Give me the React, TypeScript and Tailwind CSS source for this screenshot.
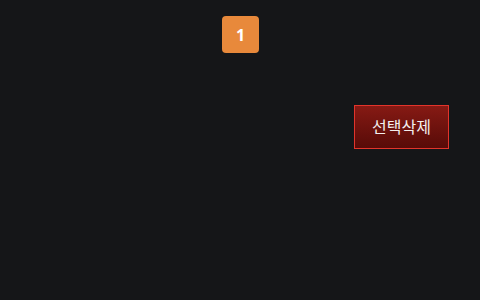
export default function App() {
  return (
    <div
      className="w-[480px] h-[300px] bg-[#151618] flex flex-col"
      style={{ fontFamily: '"Noto Sans", "Noto Sans CJK KR", sans-serif' }}
    >
      <div className="flex justify-center pt-4 pl-px">
        <div className="w-[37px] h-[37px] rounded-[4px] bg-[#e8893b] flex items-center justify-center text-white font-bold text-[16px]">
          1
        </div>
      </div>
      <div className="flex justify-end pr-[31px] mt-[52px]">
        <button className="w-[95px] h-[44px] border border-[#e2342b] bg-gradient-to-b from-[#861a14] to-[#580b08] text-[#f3eeee] text-[16px] flex items-center justify-center">
          선택삭제
        </button>
      </div>
    </div>
  );
}
